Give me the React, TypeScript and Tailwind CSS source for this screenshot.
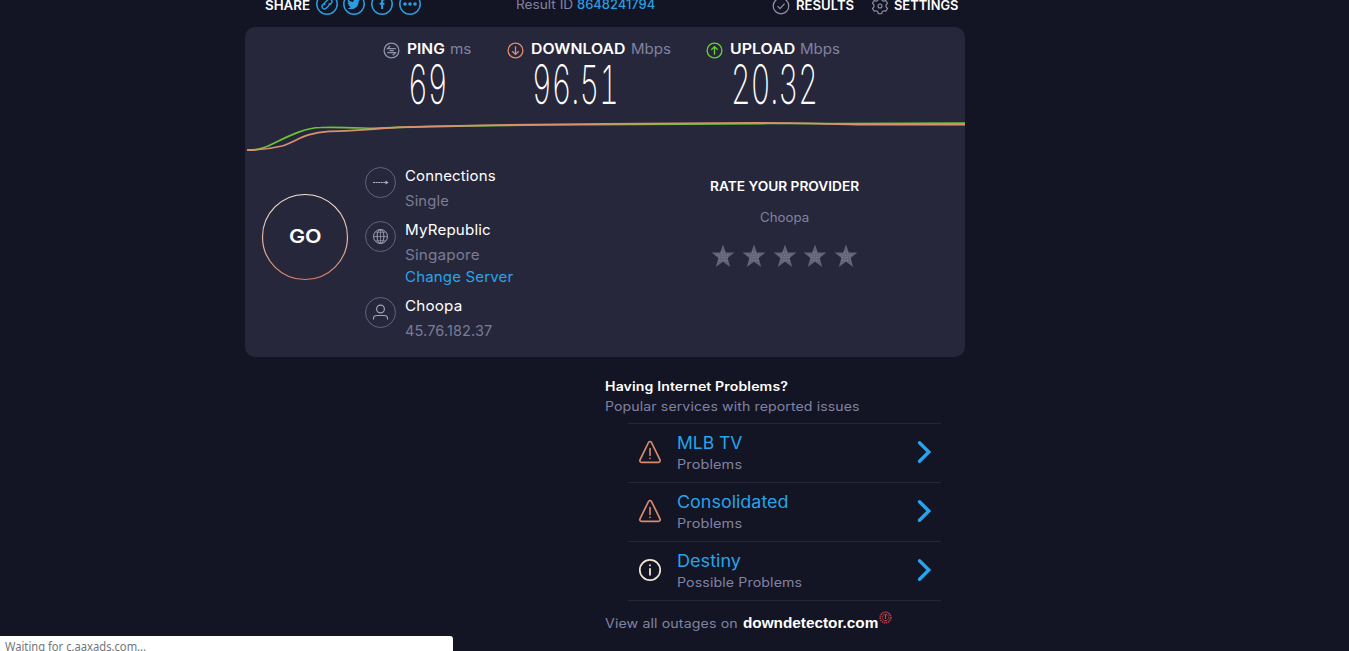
import { useLayoutEffect, useRef, useState, type ReactNode } from "react";
import clsx from "clsx";

// Stretches a single line of text to a known width
function Fit({ w, className, children }: { w: number; className?: string; children: ReactNode }) {
  const ref = useRef<HTMLSpanElement>(null);
  const [scale, setScale] = useState(1);

  useLayoutEffect(() => {
    if (ref.current) setScale((w - 1.2) / ref.current.offsetWidth);
  }, [w]);

  return (
    <span className={clsx("block whitespace-nowrap pl-[0.6px] leading-5", className)} style={{ width: w }}>
      <span ref={ref} className="inline-block origin-left" style={{ transform: `scaleX(${scale})` }}>
        {children}
      </span>
    </span>
  );
}

function ShareButton({ className, children }: { className?: string; children: ReactNode }) {
  return (
    <svg className={clsx("-mt-0.5 size-[22px] shrink-0 text-[#2a9fe0]", className)} viewBox="0 0 22 22" fill="none" stroke="currentColor">
      <circle cx="11" cy="11" r="10.2" strokeWidth="1.5" />
      {children}
    </svg>
  );
}

function Header() {
  return (
    <header className="-mt-[5px] flex h-8 shrink-0 items-start text-[12.5px] font-semibold text-white">
      <Fit w={46} className="mt-[0.6px] ml-[19px]">SHARE</Fit>
      <ShareButton className="ml-1.5">
        <g transform="rotate(-45 11 11)" strokeWidth="1.4">
          <path d="M10 8.6H7.4a2.4 2.4 0 0 0 0 4.8H11a2.4 2.4 0 0 0 2.2-1.5" />
          <path d="M12 13.4h2.6a2.4 2.4 0 0 0 0-4.8H11a2.4 2.4 0 0 0-2.2 1.5" />
        </g>
      </ShareButton>
      <ShareButton className="ml-[5px]">
        <path
          fill="currentColor"
          stroke="none"
          d="M17 6.9c-.5.2-.9.4-1.5.4.6-.3.9-.8 1.1-1.300-.5.300-1.100.500-1.700.600a2.700 2.700 0 0 0-4.500 2.400 7.400 7.400 0 0 1-5.400-2.700c-.7 1.100-.3 2.600.8 3.500-.4 0-.8-.1-1.200-.3 0 1.200.9 2.300 2.100 2.600-.4.1-.8.1-1.200 0 .3 1.100 1.300 1.800 2.500 1.900a5.300 5.300 0 0 1-3.900 1.100 7.500 7.500 0 0 0 11.500-6.700c.5-.4 1-.9 1.400-1.500z"
        />
      </ShareButton>
      <ShareButton className="ml-1.5">
        <path d="M13.5 6.6h-1.1c-.9 0-1.3.5-1.3 1.3v8.1M8.6 10.7h4.8" strokeWidth="2" />
      </ShareButton>
      <ShareButton className="ml-1.5">
        <g fill="currentColor" stroke="none">
          <circle cx="6" cy="11" r="1.8" />
          <circle cx="11" cy="11" r="1.8" />
          <circle cx="16" cy="11" r="1.8" />
        </g>
      </ShareButton>
      <div className="-mt-[0.4px] ml-[94px] flex gap-[3px] font-normal text-[#8283a0]">
        <Fit w={58}>Result ID</Fit>
        <Fit w={79} className="font-medium text-[#2a9fe0]">8648241794</Fit>
      </div>
      <svg className="mt-0.5 ml-[117px] size-[18px]" viewBox="0 0 18 18" fill="none" stroke="#9193a8" strokeWidth="1.2">
        <circle cx="9" cy="9" r="7.8" />
        <path d="M5.6 9.2l2.4 2.4 4.6-5" />
      </svg>
      <Fit w={59} className="mt-[0.6px] ml-[5px]">RESULTS</Fit>
      <svg className="mt-0.5 ml-[17px] size-[18px]" viewBox="0 0 18 18" fill="none" stroke="#9193a8" strokeWidth="1.1">
        <path d="M7.3 1.2h3.4l.5 2.1 1.5.9 2.1-.7 1.7 2.9-1.5 1.5v1.9l1.5 1.6-1.7 2.9-2.1-.6-1.5.9-.5 2.2H7.3l-.5-2.2-1.5-.9-2.1.6-1.7-2.9L3 9.800V7.900L1.500 6.400l1.700-2.900 2.100.7 1.500-.9z" strokeLinejoin="round" />
        <circle cx="9" cy="9" r="2" />
      </svg>
      <Fit w={66} className="mt-[0.6px] ml-1">SETTINGS</Fit>
    </header>
  );
}

const METRICS = [
  { name: "PING", unit: "ms", value: "69", nameW: 39, unitW: 23, valueW: 41, color: "text-[#9193a8]", icon: "M12.8 6.6H4.6l2.6-2.6M6.5 8.6h4.2M4.2 10.6h8.2l-2.6 2.6", cls: "w-[124px]" },
  { name: "DOWNLOAD", unit: "Mbps", value: "96.51", nameW: 96, unitW: 41, valueW: 88, color: "text-[#e38a6b]", icon: "M8.5 4.2v8M5.3 9.2l3.2 3.2 3.2-3.2", cls: "w-[199px]" },
  { name: "UPLOAD", unit: "Mbps", value: "20.32", nameW: 66, unitW: 41, valueW: 88, color: "text-[#6ad032]", icon: "M8.5 12.8v-8M5.3 7.8l3.2-3.2 3.2 3.2", cls: "w-[140px]" },
];

function Metrics() {
  return (
    <div className="flex h-[91px] pt-3 pl-[137px]">
      {METRICS.map((m) => (
        <div key={m.name} className={m.cls}>
          <div className="flex text-[14px]">
            <svg className={clsx("mt-[2.5px] ml-[0.5px] size-[17px]", m.color)} viewBox="0 0 17 17" fill="none" stroke="currentColor" strokeWidth="1.3">
              <circle cx="8.5" cy="8.5" r="7.4" />
              <path d={m.icon} />
            </svg>
            <Fit w={m.nameW} className="ml-[6.5px] font-semibold text-white">{m.name}</Fit>
            <Fit w={m.unitW} className="ml-1 text-[#8283a0]">{m.unit}</Fit>
          </div>
          <Fit w={m.valueW} className="ml-[25.5px] h-12 text-[54px] leading-[51px] font-[250] text-white tabular-nums">
            {m.value}
          </Fit>
        </div>
      ))}
    </div>
  );
}

function SpeedGraph() {
  return (
    <svg className="h-12 w-[720px]" viewBox="0 0 720 48" fill="none" strokeWidth="1.7">
      <path stroke="#68c436" d="M2 32C11 32 14 31.5 22 28.5C40 20 58 9.8 76 9.5C92 8.8 108 9.7 128 10.4C180 8 240 7.5 300 7C400 5.7 500 5.2 600 5.7C640 5.4 680 5.2 720 5.2" />
      <path stroke="#dc8f70" strokeWidth="1.8" d="M2 32C18 32 27 30.5 37 28C51 24 58 15 84 13.3C120 12.4 130 10.4 160 9.2C230 7.3 290 6.2 360 5.9C420 5.8 470 5 510 4.8C560 4.7 590 6.5 620 6.6L720 6.6" />
    </svg>
  );
}

const ringIcon = "mt-px size-[31px] shrink-0";

function ServerInfo() {
  return (
    <div className="flex flex-col gap-[9px] text-[14.5px] tracking-[0.15px] text-white">
      <div className="flex gap-2">
        <svg className={ringIcon} viewBox="0 0 31 31" fill="none" stroke="#62637a">
          <circle cx="15.5" cy="15.5" r="15" />
          <path d="M8 15.5h13" stroke="#b5b6c5" strokeDasharray="2 .6" />
          <path d="M20.5 13.5l3 2-3 2z" fill="#b5b6c5" stroke="none" />
        </svg>
        <div className="flex flex-col gap-[5px]">
          <Fit w={92}>Connections</Fit>
          <Fit w={45} className="text-[#7a7b95]">Single</Fit>
        </div>
      </div>
      <div className="flex gap-2">
        <svg className={ringIcon} viewBox="0 0 31 31" fill="none" stroke="#62637a">
          <circle cx="15.5" cy="15.5" r="15" />
          <g stroke="#a2a3b5">
            <circle cx="15.5" cy="15.5" r="7" />
            <ellipse cx="15.5" cy="15.5" rx="3.4" ry="7" />
            <path d="M8.5 15.5h14M15.5 8.5v14M10.5 11.2h10M10.5 19.8h10" strokeWidth=".7" />
          </g>
        </svg>
        <div className="flex flex-col">
          <Fit w={87}>MyRepublic</Fit>
          <Fit w={76} className="mt-[5px] text-[#7a7b95]">Singapore</Fit>
          <Fit w={109} className="mt-0.5 text-[#27a5ea]">Change Server</Fit>
        </div>
      </div>
      <div className="flex gap-2">
        <svg className={ringIcon} viewBox="0 0 31 31" fill="none" stroke="#62637a">
          <circle cx="15.5" cy="15.5" r="15" />
          <g stroke="#a2a3b5" strokeWidth="1.2">
            <circle cx="15.5" cy="12" r="3.9" />
            <path d="M8.5 22.5v-1.2c0-2 1.6-2.8 3.4-2.8h7.2c1.8 0 3.4.8 3.4 2.8v1.2" />
          </g>
        </svg>
        <div className="flex flex-col gap-[5px]">
          <Fit w={59}>Choopa</Fit>
          <Fit w={89} className="text-[#7a7b95]">45.76.182.37</Fit>
        </div>
      </div>
    </div>
  );
}

function GoButton() {
  return (
    <button className="mt-[27px] ml-4 grid size-[88px] shrink-0 place-items-center">
      <svg className="col-start-1 row-start-1 size-[88px]" viewBox="0 0 88 88" fill="none">
        <defs>
          <linearGradient id="go" x1="0" y1="0" x2="0" y2="1">
            <stop offset="0" stopColor="#f3e7d3" />
            <stop offset=".5" stopColor="#e8b8a0" />
            <stop offset="1" stopColor="#d98065" />
          </linearGradient>
        </defs>
        <circle cx="44" cy="44" r="42.5" stroke="url(#go)" strokeWidth="1.2" />
      </svg>
      <Fit w={34} className="col-start-1 row-start-1 text-left text-[19px] font-semibold text-white">GO</Fit>
    </button>
  );
}

function RateProvider() {
  return (
    <div className="ml-[196.5px] flex w-[150px] flex-col items-center pt-[10.6px] text-[12.5px]">
      <Fit w={150} className="font-semibold text-white">RATE YOUR PROVIDER</Fit>
      <Fit w={50} className="mt-[11px] text-[#8283a0]">Choopa</Fit>
      <div className="mt-4 flex gap-[6.8px]">
        {[1, 2, 3, 4, 5].map((n) => (
          <svg key={n} className="size-6 shrink-0" viewBox="0 0 23 23">
            <path d="M11.5.5l2.7 7.6h8.3l-6.5 5.2 2.4 8.7-6.900-4.900-6.900 4.900 2.400-8.700L.5 8.100h8.300z" fill="#626377" />
            <path d="M5.500 10.500h12M7.500 13h9M7.500 15.500h9M9.500 8h5" stroke="#85869a" strokeDasharray="1 1.500" />
          </svg>
        ))}
      </div>
    </div>
  );
}

const OUTAGES = [
  { name: "MLB TV", status: "Problems", warn: true, nameW: 67, statusW: 66 },
  { name: "Consolidated", status: "Problems", warn: true, nameW: 113, statusW: 66 },
  { name: "Destiny", status: "Possible Problems", warn: false, nameW: 65, statusW: 126 },
];

function Outages() {
  return (
    <section className="mt-[19.6px] ml-[359px] w-[340px] text-[12.5px] tracking-[0.1px] text-[#8283a0]">
      <Fit w={184} className="font-semibold text-white">Having Internet Problems?</Fit>
      <Fit w={256}>Popular services with reported issues</Fit>
      <ul className="mt-[6.4px] ml-6 w-[313px] border-b border-[#25263a]">
        {OUTAGES.map((o) => (
          <li key={o.name} className="flex h-[59px] items-center border-t border-[#25263a] pl-[10px]">
            <svg className="-mt-0.5 size-6 shrink-0" viewBox="0 0 24 24" fill="none" strokeLinecap="round" strokeLinejoin="round" strokeWidth="1.7" stroke={o.warn ? "#d98b6c" : "#f3e7d3"}>
              {o.warn ? (
                <>
                  <path d="M10.5 2.5Q12 .5 13.5 2.5L22 19.8Q22.6 22.3 20.5 22.3H3.5Q1.4 22.3 2 19.8Z" />
                  <path d="M12 8.5v7M12 18.3v.2" strokeWidth="1.6" />
                </>
              ) : (
                <>
                  <circle cx="12" cy="12" r="10.2" />
                  <path d="M12 10.8v6M12 7.2v.2" strokeWidth="1.8" />
                </>
              )}
            </svg>
            <div className="mt-0.5 ml-[14.5px] flex flex-col gap-0.5">
              <Fit w={o.nameW} className="text-[17px] tracking-normal text-[#27a5ea]">{o.name}</Fit>
              <Fit w={o.statusW}>{o.status}</Fit>
            </div>
            <svg className="-mt-0.5 mr-[9px] ml-auto h-6 w-4" viewBox="0 0 16 24" fill="none" stroke="#25a4f0" strokeWidth="3.4" strokeLinecap="round">
              <path d="M3.5 2.7l9.3 9.3-9.3 9.3" />
            </svg>
          </li>
        ))}
      </ul>
      <div className="mt-3 flex">
        <Fit w={134} className="mt-[0.6px]">View all outages on</Fit>
        <Fit w={137} className="ml-1 font-['Liberation_Sans'] text-[15px] font-bold tracking-normal text-white">downdetector.com</Fit>
        <svg className="-mt-0.5 size-[13px]" viewBox="0 0 13 13" fill="none" stroke="#a03c42">
          <circle cx="6.5" cy="6.5" r="5.3" strokeWidth="1.8" strokeDasharray="1.5 .6" />
          <circle cx="6.5" cy="6.5" r="3.2" strokeWidth="1.2" strokeDasharray="1 .7" />
          <path d="M6.5 3v5M6.5 9v1.3" stroke="#c04a50" strokeWidth="1.2" />
        </svg>
      </div>
    </section>
  );
}

export default function App() {
  return (
    <div className="relative flex h-[651px] w-[1349px] flex-col overflow-hidden bg-[#131424] pl-[245px] font-['Inter',sans-serif]">
      <Header />
      <main className="h-[330px] w-[720px] shrink-0 rounded-[10px] bg-[#26273b]">
        <Metrics />
        <SpeedGraph />
        <div className="flex items-start">
          <GoButton />
          <div className="ml-4">
            <ServerInfo />
          </div>
          <RateProvider />
        </div>
      </main>
      <Outages />
      {/* browser status bubble */}
      <div className="absolute bottom-0 left-0 h-[15px] w-[453px] overflow-hidden rounded-tr-[3px] bg-white pl-1 font-['Noto_Sans',sans-serif] text-[12px] text-[#75757a]">
        <Fit w={142} className="mt-px">Waiting for c.aaxads.com...</Fit>
      </div>
    </div>
  );
}
